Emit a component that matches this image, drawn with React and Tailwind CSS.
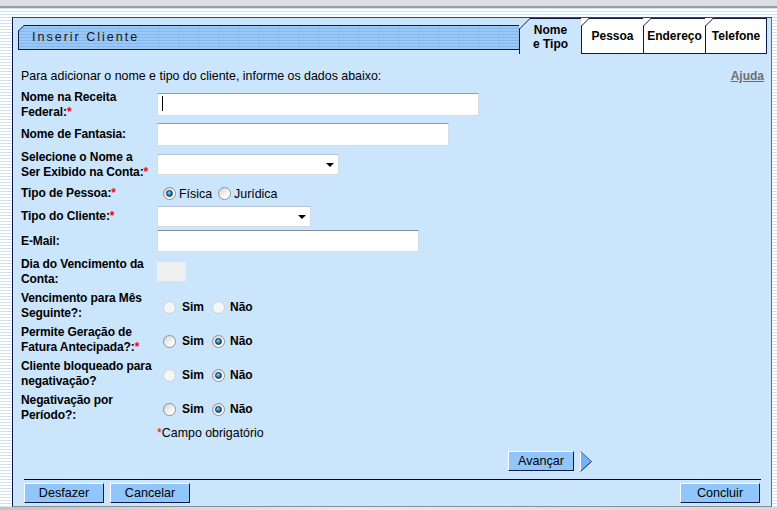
import { useState } from "react";

const NAVY = "#0d1b46";

function Label({ children, req }) {
  return (
    <div className="w-[136px] shrink-0 pt-[1px] text-[12px] font-bold leading-[15px] tracking-[-0.1px] text-black">
      {children}
      {req && <span className="text-[#ff0000]">*</span>}
    </div>
  );
}

function Radio({ checked, disabled }) {
  return (
    <span
      className={`inline-flex h-[13px] w-[13px] shrink-0 items-center justify-center rounded-full border ${
        disabled
          ? "border-[#cdd1d6] bg-[#f4f5f6]"
          : "border-[#8d9196] bg-[linear-gradient(135deg,#d2d2d2,#ffffff_75%)]"
      }`}
    >
      {checked && (
        <span className="h-[7px] w-[7px] rounded-full border border-[#0b3050] bg-[radial-gradient(circle_at_40%_35%,#8fd8ff,#1b76bd_55%,#0b3d6b)]" />
      )}
    </span>
  );
}

function SimNao({ value, simDisabled, naoDisabled }) {
  return (
    <div className="ml-[6px] mt-[4px] flex items-center text-[12px] font-bold">
      <Radio checked={value === "sim"} disabled={simDisabled} />
      <span className="ml-[6px]">Sim</span>
      <span className="ml-[8px] flex">
        <Radio checked={value === "nao"} disabled={naoDisabled} />
      </span>
      <span className="ml-[5px]">Não</span>
    </div>
  );
}

function TextBox({ width, caret }) {
  return (
    <div className="relative flex">
      <input
        type="text"
        className={`${width} h-[23px] border border-[#d3dbe4] border-t-[#8f9cab] bg-white px-1 text-[12px] outline-none`}
      />
      {caret && <span className="absolute left-[5px] top-[3px] h-[15px] w-px bg-black" />}
    </div>
  );
}

function SelectBox({ width }) {
  return (
    <div className="relative flex">
      <select
        className={`${width} h-[21px] appearance-none border border-[#d3dbe4] border-t-[#b7c1cc] bg-white text-[12px] outline-none`}
      >
        <option></option>
      </select>
      <span className="pointer-events-none absolute right-[5px] top-[9px] border-x-[4px] border-t-[4px] border-x-transparent border-t-black" />
    </div>
  );
}

function Btn({ children, className = "w-[80px]" }) {
  return (
    <button
      className={`${className} flex h-[20px] shrink-0 items-center justify-center border border-b-[#0b1a4d] border-l-white border-r-[#0b1a4d] border-t-white bg-[#91c6fb] text-[12.6px] leading-none text-black`}
    >
      {children}
    </button>
  );
}

function Tab({ children, active, last, corner }) {
  return (
    <div
      className={`relative flex h-[36px] w-[62px] items-center justify-center border-l border-t border-[#0d1b46] text-center text-[12px] font-bold leading-[14px] text-black ${
        active ? "bg-[#cbe5fd]" : "border-b bg-white"
      } ${last ? "border-r" : ""}`}
    >
      <svg
        className="absolute left-[-1px] top-[-1px]"
        width={corner + 1}
        height={corner + 1}
        viewBox={`0 0 ${corner + 1} ${corner + 1}`}
      >
        <polygon points={`0,0 ${corner},0 0,${corner}`} fill={active ? "#cbe5fd" : "#ffffff"} />
        <line x1="0.5" y1={corner} x2={corner} y2="0.5" stroke={NAVY} strokeWidth="1" />
      </svg>
      {children}
    </div>
  );
}

export default function App() {
  const [pessoa] = useState("fisica");

  return (
    <div className="h-[510px] w-[777px] overflow-hidden bg-[repeating-linear-gradient(180deg,#ffffff_0px,#ffffff_2px,#d3e3f3_2px,#d3e3f3_3px)] font-['Liberation_Sans',Arial,sans-serif] text-black">
      <div className="h-[6px] bg-[#dedfe1]" />
      <div className="h-[2px] bg-[#9a9c9f]" />
      <div className="h-[9px]" />

      <div className="ml-[12px] flex h-[490px] w-[760px] flex-col border border-b-[#8a8f96] border-l-[#0d1b46] border-r-[#5e6f86] border-t-[#3a4660] bg-[#cbe5fd]">
        {/* header + tabs */}
        <div className="flex items-start pl-[5px] pr-[4px]">
          <div className="relative mt-[7px] flex h-[25px] flex-1 items-center border-y border-l border-[#0d1b46] bg-[repeating-linear-gradient(90deg,transparent_0px,transparent_19px,rgba(40,70,120,0.06)_19px,rgba(40,70,120,0.06)_20px),repeating-linear-gradient(180deg,#9cc8f8_0px,#9cc8f8_2px,#85b7f1_2px,#85b7f1_3px)] pl-[13px]">
            <svg className="absolute left-[-1px] top-[-1px]" width="7" height="7" viewBox="0 0 7 7">
              <polygon points="0,0 6,0 0,6" fill="#cbe5fd" />
              <line x1="0.5" y1="6" x2="6" y2="0.5" stroke={NAVY} strokeWidth="1" />
            </svg>
            <span className="text-[12.5px] tracking-[2px] text-[#141414]">Inserir Cliente</span>
          </div>
          <Tab active corner={11}>
            Nome
            <br />e Tipo
          </Tab>
          <Tab corner={8}>Pessoa</Tab>
          <Tab corner={8}>Endereço</Tab>
          <Tab corner={8} last>
            Telefone
          </Tab>
        </div>

        {/* form */}
        <div className="flex flex-col pl-[8px] pr-[7px] pt-[12px]">
          <div className="flex h-[20px] items-center justify-between text-[12.4px]">
            <span>Para adicionar o nome e tipo do cliente, informe os dados abaixo:</span>
            <span className="text-[12px] font-bold text-[#6e6e6e] underline">Ajuda</span>
          </div>

          <div className="flex h-[36px] items-center">
            <Label req>
              Nome na Receita
              <br />
              Federal:
            </Label>
            <TextBox width="w-[322px]" caret />
          </div>

          <div className="flex h-[24px] items-center">
            <Label>Nome de Fantasia:</Label>
            <TextBox width="w-[292px]" />
          </div>

          <div className="flex h-[36px] items-center">
            <Label req>
              Selecione o Nome a
              <br />
              Ser Exibido na Conta:
            </Label>
            <SelectBox width="w-[182px]" />
          </div>

          <div className="flex h-[22px] items-center">
            <Label req>Tipo de Pessoa:</Label>
            <div className="ml-[6px] mt-[2px] flex items-center text-[12.4px]">
              <Radio checked={pessoa === "fisica"} />
              <span className="ml-[3px]">Física</span>
              <span className="ml-[6px] flex">
                <Radio checked={pessoa === "juridica"} />
              </span>
              <span className="ml-[3px]">Jurídica</span>
            </div>
          </div>

          <div className="flex h-[24px] items-center">
            <Label req>Tipo do Cliente:</Label>
            <SelectBox width="w-[154px]" />
          </div>

          <div className="flex h-[26px] items-center">
            <Label>E-Mail:</Label>
            <div className="h-[22px] w-[262px] border border-[#d3dbe4] border-t-[#7f8ea0] bg-white" />
          </div>

          <div className="flex h-[34px] items-center">
            <Label>
              Dia do Vencimento da
              <br />
              Conta:
            </Label>
            <div className="h-[19px] w-[29px] bg-[#f0f0f0]" />
          </div>

          <div className="flex h-[34px] items-center">
            <Label>
              Vencimento para Mês
              <br />
              Seguinte?:
            </Label>
            <SimNao simDisabled naoDisabled />
          </div>

          <div className="flex h-[34px] items-center">
            <Label req>
              Permite Geração de
              <br />
              Fatura Antecipada?:
            </Label>
            <SimNao value="nao" />
          </div>

          <div className="flex h-[34px] items-center">
            <Label>
              Cliente bloqueado para
              <br />
              negativação?
            </Label>
            <SimNao value="nao" simDisabled />
          </div>

          <div className="flex h-[34px] items-center">
            <Label>
              Negativação por
              <br />
              Período?:
            </Label>
            <SimNao value="nao" />
          </div>

          <div className="flex h-[18px] items-center pl-[136px] text-[12.4px]">
            <span className="text-[#ff0000]">*</span>Campo obrigatório
          </div>

          <div className="ml-[487px] mt-[9px] flex h-[20px] items-center">
            <Btn className="w-[66px]">Avançar</Btn>
            <svg className="ml-[6px]" width="12" height="21" viewBox="0 0 12 21">
              <polygon points="0.5,0.5 11.5,10.5 0.5,20.5" fill="#74b2f5" />
              <line x1="0.5" y1="0.5" x2="0.5" y2="20.5" stroke="#ffffff" strokeWidth="1" />
              <line x1="0.5" y1="0.5" x2="11.5" y2="10.5" stroke="#3d5f8c" strokeWidth="1" />
              <line x1="11.5" y1="10.5" x2="0.5" y2="20.5" stroke="#0b1a4d" strokeWidth="1" />
            </svg>
          </div>
        </div>

        <div className="ml-[11px] mt-[8px] w-[737px] border-t border-black" />
        <div className="ml-[11px] mt-[3px] flex w-[736px] items-center">
          <Btn>Desfazer</Btn>
          <Btn className="ml-[6px] w-[80px]">Cancelar</Btn>
          <Btn className="ml-auto w-[80px]">Concluir</Btn>
        </div>
      </div>

      <div className="h-[4px] bg-[linear-gradient(90deg,#c4c4c4,#eaeaea_45%,#d6d6d6)]" />
    </div>
  );
}
